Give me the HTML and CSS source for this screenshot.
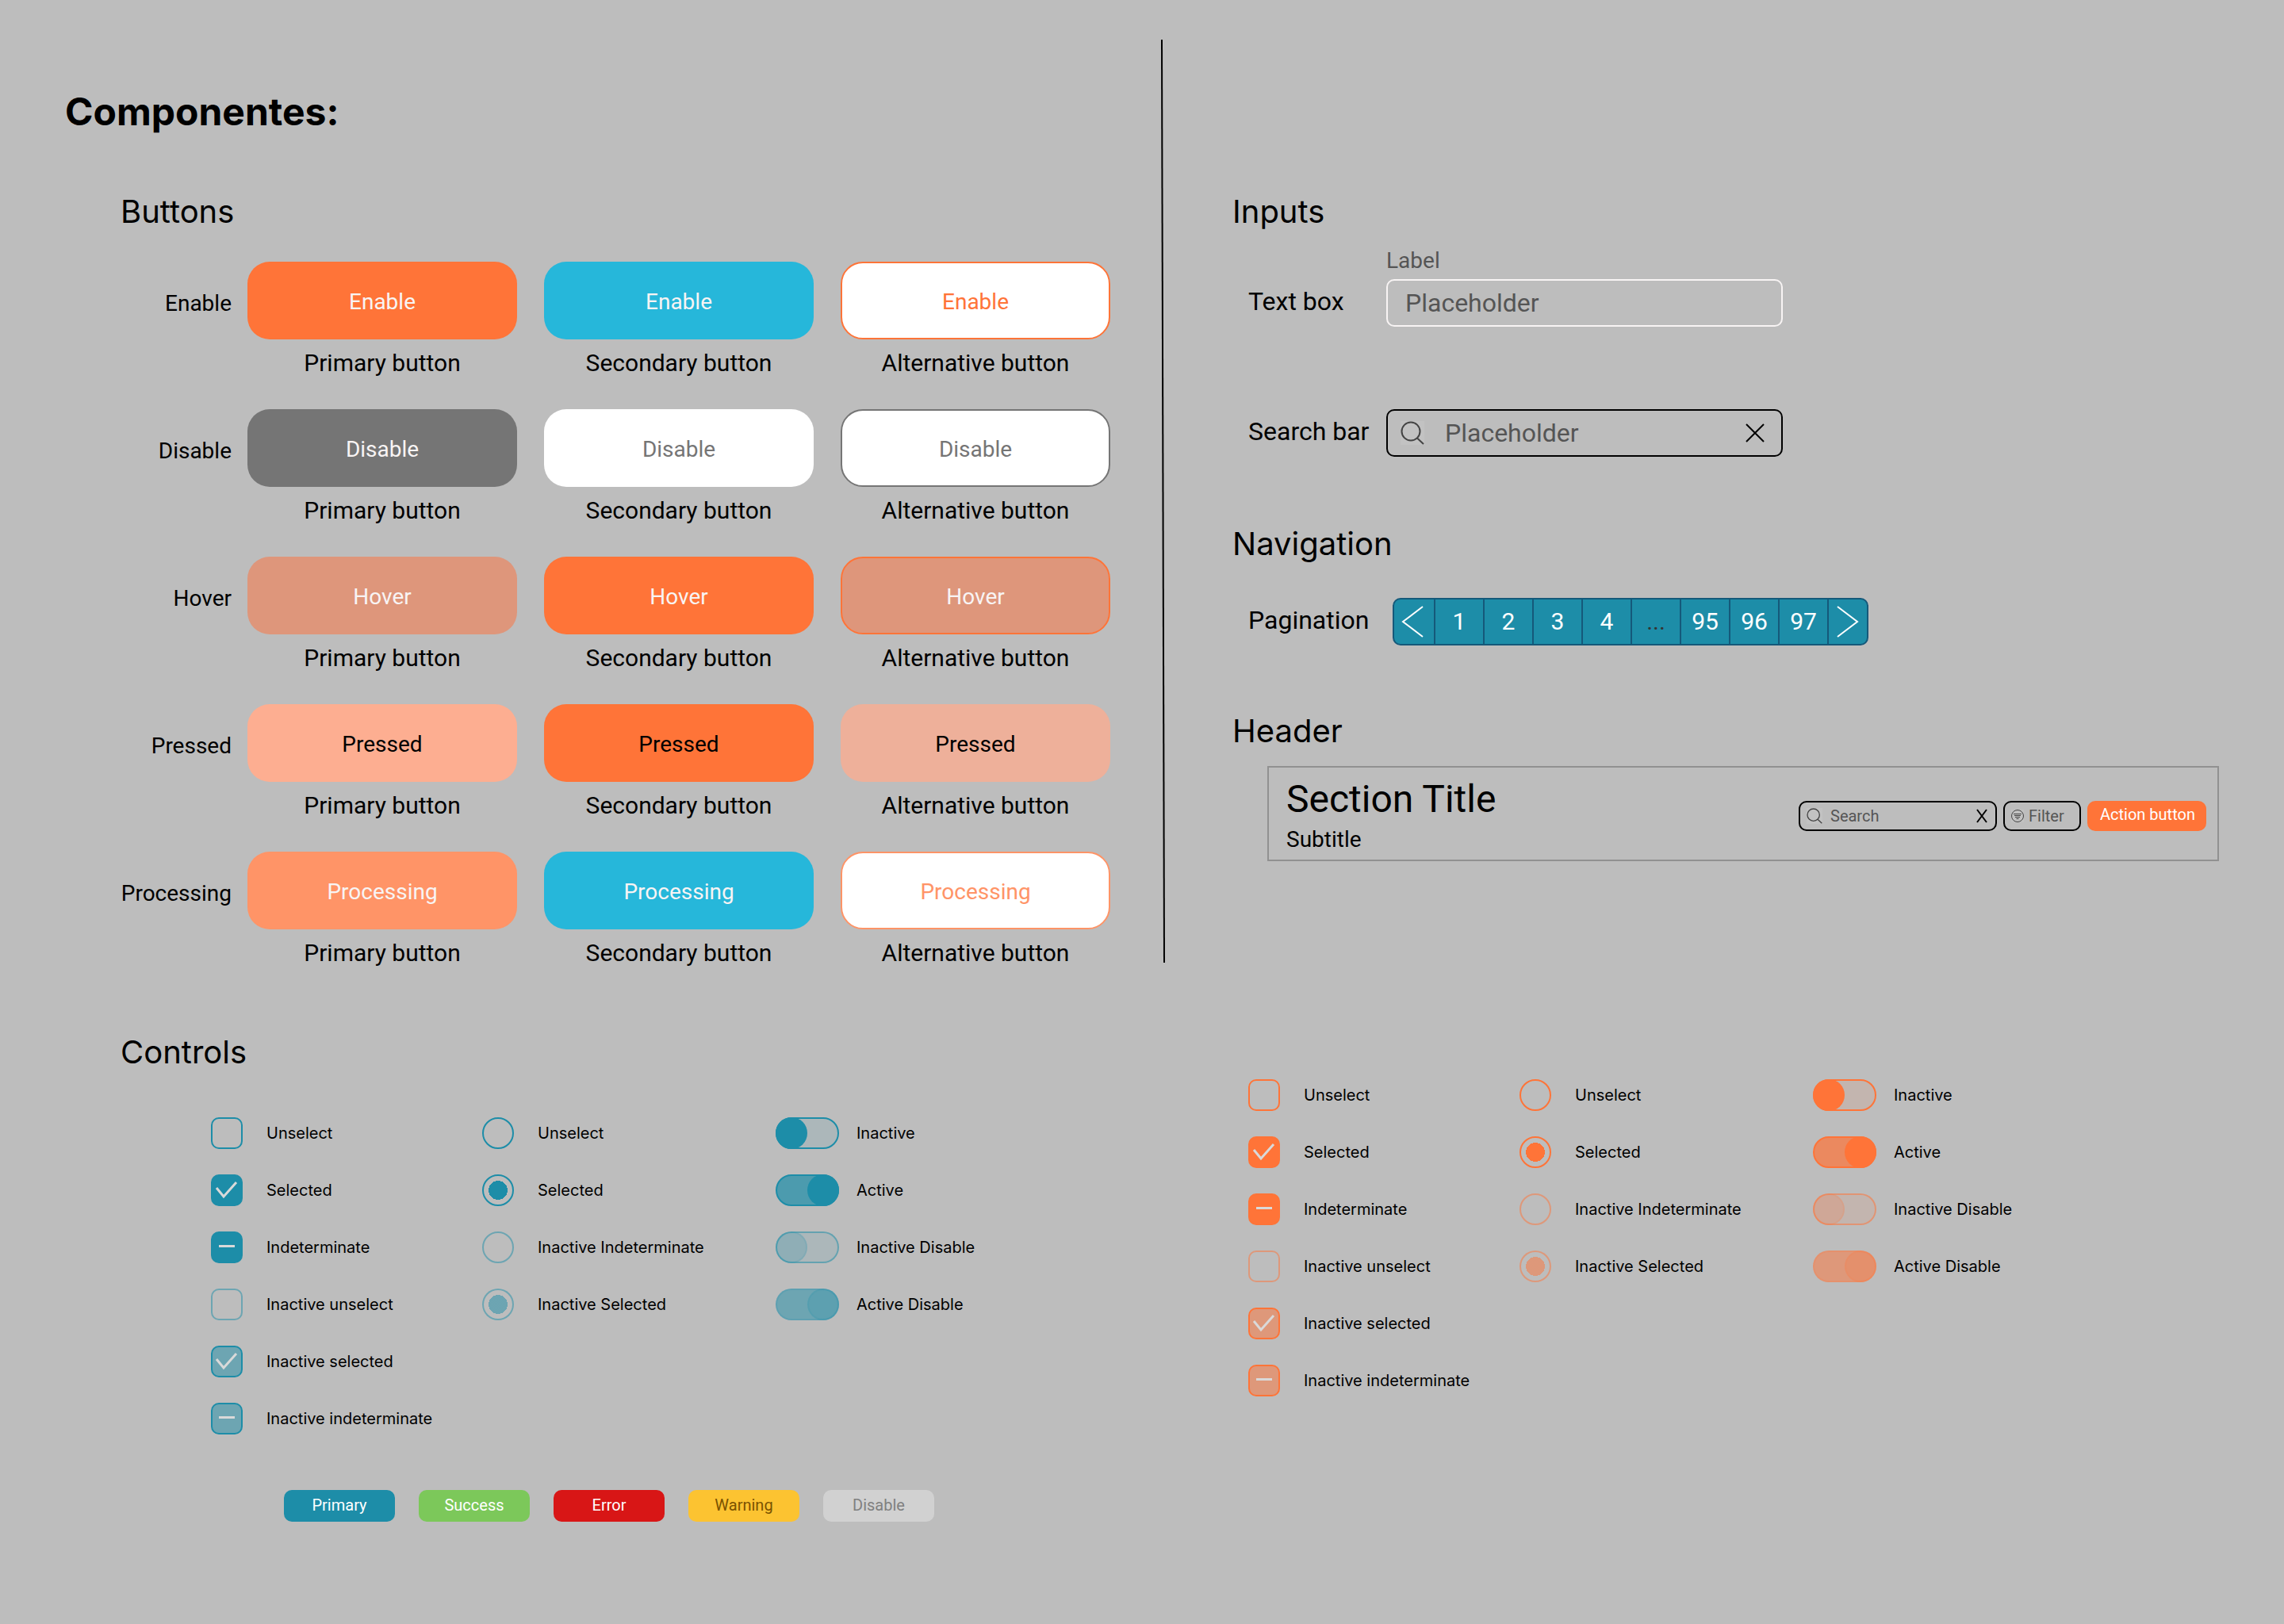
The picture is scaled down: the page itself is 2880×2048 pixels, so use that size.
FILE: index.html
```html
<!DOCTYPE html>
<html lang="es">
<head>
<meta charset="utf-8">
<title>Componentes</title>
<link rel="stylesheet" href="styles.css">
</head>
<body>
<main class="board">
  <section class="panel panel-buttons">
    <h1 class="page-title">Componentes:</h1>
    <div class="indent">
      <h2 class="heading">Buttons</h2>
      <div class="states">
        <div class="state">
          <span class="state-name">Enable</span>
          <div class="state-items">
            <div class="sample"><button type="button" class="btn orange">Enable</button><span class="caption">Primary button</span></div>
            <div class="sample"><button type="button" class="btn cyan">Enable</button><span class="caption">Secondary button</span></div>
            <div class="sample"><button type="button" class="btn outline">Enable</button><span class="caption">Alternative button</span></div>
          </div>
        </div>
        <div class="state">
          <span class="state-name">Disable</span>
          <div class="state-items">
            <div class="sample"><button type="button" class="btn gray" disabled>Disable</button><span class="caption">Primary button</span></div>
            <div class="sample"><button type="button" class="btn white" disabled>Disable</button><span class="caption">Secondary button</span></div>
            <div class="sample"><button type="button" class="btn white gray-edge" disabled>Disable</button><span class="caption">Alternative button</span></div>
          </div>
        </div>
        <div class="state">
          <span class="state-name">Hover</span>
          <div class="state-items">
            <div class="sample"><button type="button" class="btn faded">Hover</button><span class="caption">Primary button</span></div>
            <div class="sample"><button type="button" class="btn orange">Hover</button><span class="caption">Secondary button</span></div>
            <div class="sample"><button type="button" class="btn faded orange-edge">Hover</button><span class="caption">Alternative button</span></div>
          </div>
        </div>
        <div class="state">
          <span class="state-name">Pressed</span>
          <div class="state-items">
            <div class="sample"><button type="button" class="btn peach pressed">Pressed</button><span class="caption">Primary button</span></div>
            <div class="sample"><button type="button" class="btn orange pressed">Pressed</button><span class="caption">Secondary button</span></div>
            <div class="sample"><button type="button" class="btn peach-dim pressed">Pressed</button><span class="caption">Alternative button</span></div>
          </div>
        </div>
        <div class="state">
          <span class="state-name">Processing</span>
          <div class="state-items">
            <div class="sample"><button type="button" class="btn soft">Processing</button><span class="caption">Primary button</span></div>
            <div class="sample"><button type="button" class="btn cyan">Processing</button><span class="caption">Secondary button</span></div>
            <div class="sample"><button type="button" class="btn outline soft-edge">Processing</button><span class="caption">Alternative button</span></div>
          </div>
        </div>
      </div>
    </div>
  </section>

  <svg class="divider" viewBox="0 0 5 1161" preserveAspectRatio="none" aria-hidden="true"><path d="M1 0 4 1161" stroke="#000" stroke-width="2"/></svg>

  <section class="panel panel-inputs">
    <h2 class="heading">Inputs</h2>
    <div class="row row-text">
      <span class="row-name">Text box</span>
      <div class="field">
        <label class="field-label" for="text-box">Label</label>
        <input class="text-box" id="text-box" type="text" placeholder="Placeholder">
      </div>
    </div>
    <div class="row row-search">
      <label class="row-name" for="search-bar">Search bar</label>
      <div class="search">
        <svg class="search-icon" viewBox="0 0 30 30" aria-hidden="true"><circle cx="13" cy="13" r="11.500"/><path d="M21 21.500 29 29"/></svg>
        <input class="search-input" id="search-bar" type="text" placeholder="Placeholder">
        <button type="button" class="clear" aria-label="Clear"><svg viewBox="0 0 24 24"><path d="M1 1 23 23M23 1 1 23"/></svg></button>
      </div>
    </div>

    <h2 class="heading heading-nav">Navigation</h2>
    <div class="row row-pages">
      <span class="row-name">Pagination</span>
      <nav class="pages" aria-label="Pagination">
        <a class="page arrow" href="#" aria-label="Previous"><svg viewBox="0 0 28 40"><path d="M27 1 2 20 27 39"/></svg></a>
        <a class="page" href="#">1</a>
        <a class="page" href="#">2</a>
        <a class="page" href="#">3</a>
        <a class="page" href="#">4</a>
        <span class="page dots">...</span>
        <a class="page" href="#">95</a>
        <a class="page" href="#">96</a>
        <a class="page" href="#">97</a>
        <a class="page arrow" href="#" aria-label="Next"><svg viewBox="0 0 28 40"><path d="M1 1 26 20 1 39"/></svg></a>
      </nav>
    </div>

    <h2 class="heading heading-header">Header</h2>
    <header class="section-header">
      <div class="titles">
        <h3 class="section-title">Section Title</h3>
        <p class="subtitle">Subtitle</p>
      </div>
      <div class="tools">
        <div class="search compact">
          <svg class="search-icon" viewBox="0 0 30 30" aria-hidden="true"><circle cx="13" cy="13" r="11.500"/><path d="M21 21.500 29 29"/></svg>
          <input class="search-input" type="text" placeholder="Search" aria-label="Search">
          <button type="button" class="clear" aria-label="Clear"><svg viewBox="0 0 14 18"><path d="M1 1 13 17M13 1 1 17"/></svg></button>
        </div>
        <button type="button" class="filter"><svg viewBox="0 0 16 16" aria-hidden="true"><circle cx="8" cy="8" r="7.500"/><path d="M3 5.500h10M4 7.500h8M5 9.500h6M6.500 11.500h3"/></svg>Filter</button>
        <button type="button" class="action">Action button</button>
      </div>
    </header>
  </section>

  <section class="panel panel-controls teal">
    <h2 class="heading">Controls</h2>
    <div class="controls">
      <div class="control-list checks">
        <label class="control"><input type="checkbox">Unselect</label>
        <label class="control"><input type="checkbox" checked>Selected</label>
        <label class="control"><input type="checkbox" class="mixed" aria-checked="mixed">Indeterminate</label>
        <label class="control"><input type="checkbox" disabled>Inactive unselect</label>
        <label class="control"><input type="checkbox" checked disabled>Inactive selected</label>
        <label class="control"><input type="checkbox" class="mixed" aria-checked="mixed" disabled>Inactive indeterminate</label>
      </div>
      <div class="control-list radios">
        <label class="control"><input type="radio" name="teal">Unselect</label>
        <label class="control"><input type="radio" name="teal" checked>Selected</label>
        <label class="control"><input type="radio" name="teal-off" disabled>Inactive Indeterminate</label>
        <label class="control"><input type="radio" name="teal-off" checked disabled>Inactive Selected</label>
      </div>
      <div class="control-list switches">
        <label class="control"><input type="checkbox" role="switch">Inactive</label>
        <label class="control"><input type="checkbox" role="switch" checked>Active</label>
        <label class="control"><input type="checkbox" role="switch" disabled>Inactive Disable</label>
        <label class="control"><input type="checkbox" role="switch" checked disabled>Active Disable</label>
      </div>
    </div>
    <div class="tags">
      <button type="button" class="tag tag-primary">Primary</button>
      <button type="button" class="tag tag-success">Success</button>
      <button type="button" class="tag tag-error">Error</button>
      <button type="button" class="tag tag-warning">Warning</button>
      <button type="button" class="tag tag-disable" disabled>Disable</button>
    </div>
  </section>

  <section class="panel panel-alt" aria-label="Controls, orange">
    <div class="controls">
      <div class="control-list checks">
        <label class="control"><input type="checkbox">Unselect</label>
        <label class="control"><input type="checkbox" checked>Selected</label>
        <label class="control"><input type="checkbox" class="mixed" aria-checked="mixed">Indeterminate</label>
        <label class="control"><input type="checkbox" disabled>Inactive unselect</label>
        <label class="control"><input type="checkbox" checked disabled>Inactive selected</label>
        <label class="control"><input type="checkbox" class="mixed" aria-checked="mixed" disabled>Inactive indeterminate</label>
      </div>
      <div class="control-list radios">
        <label class="control"><input type="radio" name="orange">Unselect</label>
        <label class="control"><input type="radio" name="orange" checked>Selected</label>
        <label class="control"><input type="radio" name="orange-off" disabled>Inactive Indeterminate</label>
        <label class="control"><input type="radio" name="orange-off" checked disabled>Inactive Selected</label>
      </div>
      <div class="control-list switches">
        <label class="control"><input type="checkbox" role="switch">Inactive</label>
        <label class="control"><input type="checkbox" role="switch" checked>Active</label>
        <label class="control"><input type="checkbox" role="switch" disabled>Inactive Disable</label>
        <label class="control"><input type="checkbox" role="switch" checked disabled>Active Disable</label>
      </div>
    </div>
  </section>
</main>
</body>
</html>
```
FILE: styles.css
```css
:root {
  --orange: #ff7438;
  --cyan: #26b7da;
  --teal: #1d8da8;
  --ink: #000;
  --muted: #555;
  --paper: #f8f4f4;
  --accent: var(--orange);
}

*, *::before { box-sizing: border-box; }

body {
  margin: 0;
  background: #bdbdbd;
  color: var(--ink);
  font-family: Roboto, "Liberation Sans", sans-serif;
}

h1, h2, h3, p { margin: 0; font-weight: 400; }

button, input { font-family: inherit; margin: 0; }

button { border: 0; padding: 0; cursor: pointer; }

.board {
  display: grid;
  grid-template-columns: 659fr auto 622fr;
  padding: 50px 82px;
}

.page-title {
  padding-top: 61px;
  margin-bottom: 72px;
  font: 700 48px/60px Inter, sans-serif;
}

.heading { font: 400 40px/48px Inter, sans-serif; }

.indent { padding-left: 70px; }

.divider {
  width: 5px;
  height: calc(100% - 6px);
  margin: 0 85px 0 64px;
}

/* Button states */

.states {
  display: flex;
  flex-direction: column;
  gap: 40px;
  margin-top: 39px;
}

.state { display: flex; gap: 20px; }

.state-name {
  flex: none;
  width: 140px;
  padding-top: 4px;
  text-align: right;
  font-size: 28px;
  line-height: 98px;
}

.state-items {
  flex: 1;
  display: grid;
  grid-template-columns: repeat(3, 1fr);
  gap: 34px;
}

.sample { display: flex; flex-direction: column; gap: 12px; }

.btn {
  height: 98px;
  padding-top: 3px;
  border-radius: 28px;
  font-size: 28px;
  color: var(--paper);
}

.caption { text-align: center; font-size: 30px; line-height: 36px; }

.orange { background: var(--orange); }
.cyan { background: var(--cyan); }
.gray { background: #757575; }
.white { background: #fff; color: #757575; }
.gray-edge { border: 2px solid #757575; }
.outline { background: #fff; color: var(--orange); border: 2px solid var(--orange); }
.faded { background: #de967b; }
.orange-edge { border: 2px solid var(--orange); }
.peach { background: #fdae91; }
.peach-dim { background: #eeb09a; }
.soft { background: #ff9467; }
.soft-edge { color: #ff9467; border-color: #ff9467; }
.pressed { color: var(--ink); }

/* Inputs */

.panel-inputs { padding-top: 193px; }

.row {
  display: flex;
  align-items: flex-end;
  padding-left: 20px;
}

.row-name {
  flex: none;
  width: 174px;
  padding-bottom: 4px;
  font-size: 32px;
  line-height: 56px;
}

.row-text { margin-top: 22px; }
.row-search { margin-top: 104px; }

.field {
  display: flex;
  flex-direction: column;
  gap: 7px;
  width: 500px;
}

.field-label { font-size: 28px; line-height: 32px; color: var(--muted); }

.text-box {
  height: 60px;
  padding: 0 22px;
  border: 2px solid var(--paper);
  border-radius: 10px;
  background: none;
  font-size: 32px;
}

::placeholder { color: var(--muted); opacity: 1; }

.search {
  display: flex;
  align-items: center;
  gap: 26px;
  width: 500px;
  height: 60px;
  padding: 0 21px 0 16px;
  border: 2px solid var(--ink);
  border-radius: 10px;
}

.search-icon {
  flex: none;
  width: 30px;
  height: 30px;
  background: #c2c2c2;
  fill: none;
  stroke: #444;
  stroke-width: 2;
}

.search-input {
  flex: 1;
  min-width: 0;
  padding: 0;
  border: 0;
  background: none;
  font-size: 32px;
}

.clear { flex: none; width: 24px; height: 24px; background: none; }

.clear svg {
  display: block;
  width: 100%;
  height: 100%;
  fill: none;
  stroke: var(--ink);
  stroke-width: 2;
}

/* Pagination */

.heading-nav { margin-top: 86px; }
.row-pages { margin-top: 44px; }

.pages {
  display: flex;
  height: 60px;
  margin-left: 8px;
  border: 2px solid #15597a;
  border-radius: 10px;
  background: var(--teal);
}

.page {
  width: 62px;
  border-right: 2px solid #15597a;
  color: #fff;
  font-size: 30px;
  line-height: 56px;
  text-align: center;
  text-decoration: none;
}

.dots { color: #333; }

.arrow {
  display: flex;
  align-items: center;
  justify-content: center;
  width: 52px;
  padding-right: 4px;
}

.arrow:last-child { width: 48px; padding-right: 0; border-right: 0; }

.arrow svg {
  width: 28px;
  height: 40px;
  fill: none;
  stroke: #fff;
  stroke-width: 2;
}

/* Section header */

.heading-header { margin-top: 84px; }

.section-header {
  display: flex;
  align-items: center;
  justify-content: space-between;
  margin: 20px 0 0 44px;
  padding: 12px 14px 7px 22px;
  border: 2px solid #919191;
}

.titles { display: flex; flex-direction: column; gap: 5px; }
.section-title { font-size: 48px; line-height: 56px; }
.subtitle { font-size: 28px; line-height: 36px; }

.tools { display: flex; gap: 8px; }

.compact {
  gap: 10px;
  width: 250px;
  height: 38px;
  padding: 0 10px 0 8px;
}

.compact .search-icon { width: 20px; height: 20px; }
.compact .search-input { font-size: 20px; }
.compact .clear { width: 14px; height: 18px; }

.filter {
  display: flex;
  align-items: center;
  gap: 6px;
  width: 98px;
  height: 38px;
  padding: 0 8px;
  border: 2px solid var(--ink);
  border-radius: 10px;
  background: none;
  color: var(--muted);
  font-size: 20px;
}

.filter svg {
  width: 16px;
  height: 16px;
  background: #c2c2c2;
  fill: none;
  stroke: #444;
}

.action {
  width: 150px;
  height: 38px;
  padding: 0 0 4px 2px;
  border-radius: 10px;
  background: var(--orange);
  color: #fff;
  font-size: 20px;
}

/* Selection controls */

.panel-controls { grid-column: 1; margin-top: 83px; padding-left: 70px; }
.panel-alt { grid-column: 3; margin-top: 83px; padding: 58px 0 0 20px; }
.teal { --accent: var(--teal); }

.controls { display: flex; align-items: flex-start; }
.panel-controls .controls { margin: 58px 0 0 114px; }

.control-list { display: flex; flex-direction: column; gap: 32px; }
.checks { width: 342px; }
.radios { width: 370px; }

.control {
  display: flex;
  align-items: center;
  gap: 30px;
  font: 400 20px/40px Inter, sans-serif;
}

.switches .control { gap: 22px; }

.control input {
  --half: color-mix(in srgb, var(--accent) 50%, transparent);
  appearance: none;
  flex: none;
  position: relative;
  width: 40px;
  height: 40px;
  border: 2px solid var(--accent);
  border-radius: 10px;
  background: center / 40px 40px no-repeat border-box;
}

.checks input:disabled,
.radios input:disabled { border-color: var(--half); }

.checks input:checked {
  background-color: var(--accent);
  background-image: url("data:image/svg+xml,%3Csvg xmlns='http://www.w3.org/2000/svg' viewBox='0 0 40 40'%3E%3Cpath d='M7 17 16 28 32 10' fill='none' stroke='%23d9d9d9' stroke-width='3'/%3E%3C/svg%3E");
}

.checks .mixed {
  background-color: var(--accent);
  background-image: url("data:image/svg+xml,%3Csvg xmlns='http://www.w3.org/2000/svg' viewBox='0 0 40 40'%3E%3Cpath d='M10 18.500h20' fill='none' stroke='%23d9d9d9' stroke-width='3'/%3E%3C/svg%3E");
}

.checks input:checked:disabled,
.checks .mixed:disabled {
  border-color: var(--accent);
  background-color: var(--half);
}

.radios input { border-radius: 50%; }

.radios input:checked {
  background-image: radial-gradient(circle, var(--accent) 12px, transparent 12px);
}

.radios input:checked:disabled {
  background-image: radial-gradient(circle, var(--half) 12px, transparent 12px);
}

.switches input {
  width: 80px;
  border-radius: 20px;
  background-color: color-mix(in srgb, var(--accent) 10%, transparent);
}

.switches input::before {
  content: "";
  position: absolute;
  top: -2px;
  left: -2px;
  width: 40px;
  height: 40px;
  border-radius: 50%;
  background: var(--accent);
}

.switches input:checked { background-color: color-mix(in srgb, var(--accent) 70%, transparent); }
.switches input:checked::before { left: 38px; }

.switches input:disabled { border-color: var(--half); }

.switches input:disabled::before {
  border: 2px solid color-mix(in srgb, var(--accent) 30%, transparent);
  background: color-mix(in srgb, var(--accent) 20%, transparent);
  background-clip: padding-box;
}

.switches input:checked:disabled {
  border-color: color-mix(in srgb, var(--accent) 20%, transparent);
  background-color: var(--half);
}

/* Status tags */

.tags { display: flex; gap: 30px; margin: 70px 0 0 206px; }

.tag {
  width: 140px;
  height: 40px;
  padding-bottom: 2px;
  border-radius: 10px;
  color: #fff;
  font-size: 20px;
}

.tag-primary { background: var(--teal); }
.tag-success { background: #7cc85a; }
.tag-error { background: #d81616; }
.tag-warning { background: #fcc331; color: #7a5200; }
.tag-disable { background: #d1d1d1; color: #808080; }
```
